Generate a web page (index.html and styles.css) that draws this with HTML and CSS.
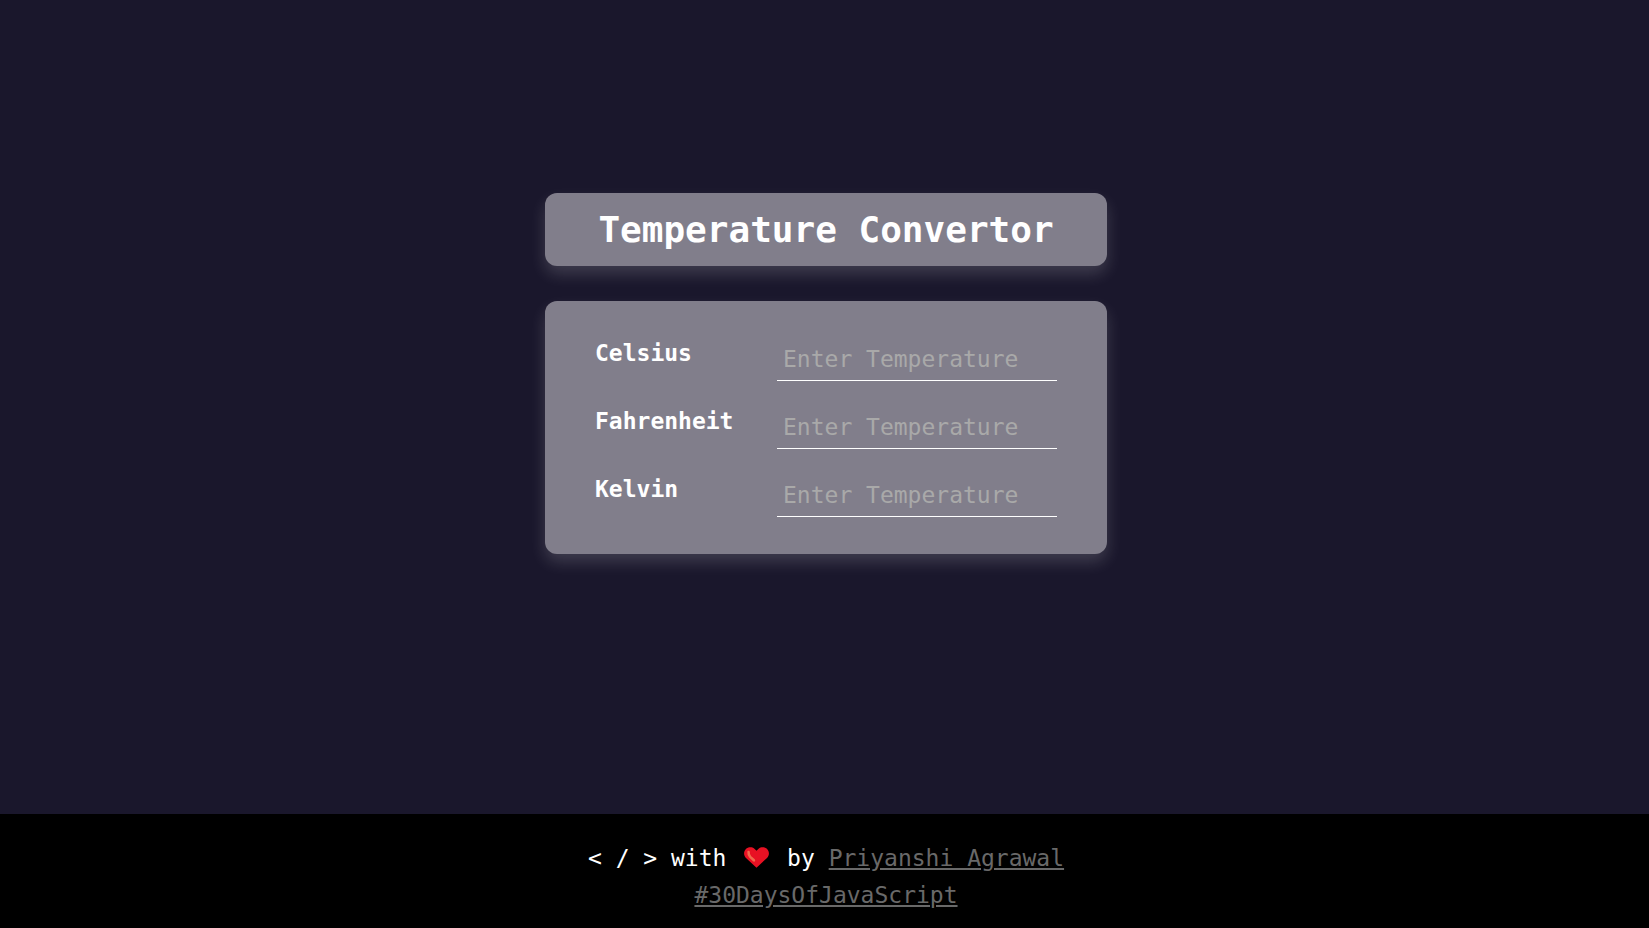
FILE: index.html
```html
<!DOCTYPE html>
<html lang="en">
<head>
  <meta charset="utf-8">
  <meta name="viewport" content="width=device-width, initial-scale=1">
  <title>Temperature Convertor</title>
  <link rel="stylesheet" href="styles.css">
</head>
<body>
  <main class="page">
    <div class="converter">
      <h1 class="panel title">Temperature Convertor</h1>
      <form class="panel fields">
        <label class="label" for="celsius">Celsius</label>
        <input class="input" id="celsius" type="text" inputmode="decimal" placeholder="Enter Temperature">
        <label class="label" for="fahrenheit">Fahrenheit</label>
        <input class="input" id="fahrenheit" type="text" inputmode="decimal" placeholder="Enter Temperature">
        <label class="label" for="kelvin">Kelvin</label>
        <input class="input" id="kelvin" type="text" inputmode="decimal" placeholder="Enter Temperature">
      </form>
    </div>
  </main>
  <footer class="footer">
    <p class="credit">&lt; / &gt; with <svg class="heart" viewBox="0 0 25 21" role="img" aria-label="love"><path fill="#e81123" d="M12.5 20.7 2 10.9C-.5 8.500-.5 4.700 1.700 2.300 4-.1 7.900-.3 10.400 1.700L12.500 3.700 14.600 1.700C17.100-.3 21-.1 23.300 2.300c2.200 2.400 2.200 6.200-.3 8.600z"/><path fill="none" stroke="#f06a4c" stroke-width="2.600" stroke-linecap="round" stroke-linejoin="round" d="M4.600 5c-.2 2 .3 3.600 1.600 4.900l3.700 3.400"/></svg> by <a class="link" href="#author">Priyanshi Agrawal</a></p>
    <p class="credit"><a class="link" href="#30DaysOfJavaScript">#30DaysOfJavaScript</a></p>
  </footer>
</body>
</html>
```

FILE: styles.css
```css
* {
  box-sizing: border-box;
}

body {
  display: flex;
  flex-direction: column;
  min-height: 100vh;
  margin: 0;
  background: #1a172c;
  color: #fff;
  font-family: Consolas, "DejaVu Sans Mono", monospace;
  font-size: 23px;
}

.page {
  display: flex;
  flex: 1;
  align-items: center;
  justify-content: center;
  padding: 0 0 67px 3px;
}

.converter {
  display: grid;
  gap: 35px;
  width: 562px;
  max-width: 100%;
}

.panel {
  margin: 0;
  border-radius: 12px;
  background: #817e8b;
  box-shadow: 0 8px 16px rgba(255, 255, 255, 0.16);
}

.title {
  padding: 16px 0;
  font-size: 36px;
  line-height: 41px;
  text-align: center;
}

.fields {
  display: grid;
  grid-template-columns: 1fr 280px;
  align-items: start;
  row-gap: 24px;
  padding: 36px 50px 37px;
}

.label {
  font-weight: bold;
  line-height: 32px;
}

.input {
  width: 100%;
  height: 44px;
  padding: 8px 6px;
  border: 0;
  border-bottom: 1px solid #fff;
  outline: 0;
  background: transparent;
  color: #fff;
  font: inherit;
  line-height: 27px;
}

.input::placeholder {
  color: #a9a9a9;
}

.footer {
  padding: 26px 0 14px 3px;
  background: #000;
  line-height: 37px;
  text-align: center;
}

.credit {
  margin: 0;
}

.heart {
  width: 25px;
  height: 21px;
  margin: 0 4px;
  vertical-align: -2px;
}

.link {
  color: #696969;
}
```
